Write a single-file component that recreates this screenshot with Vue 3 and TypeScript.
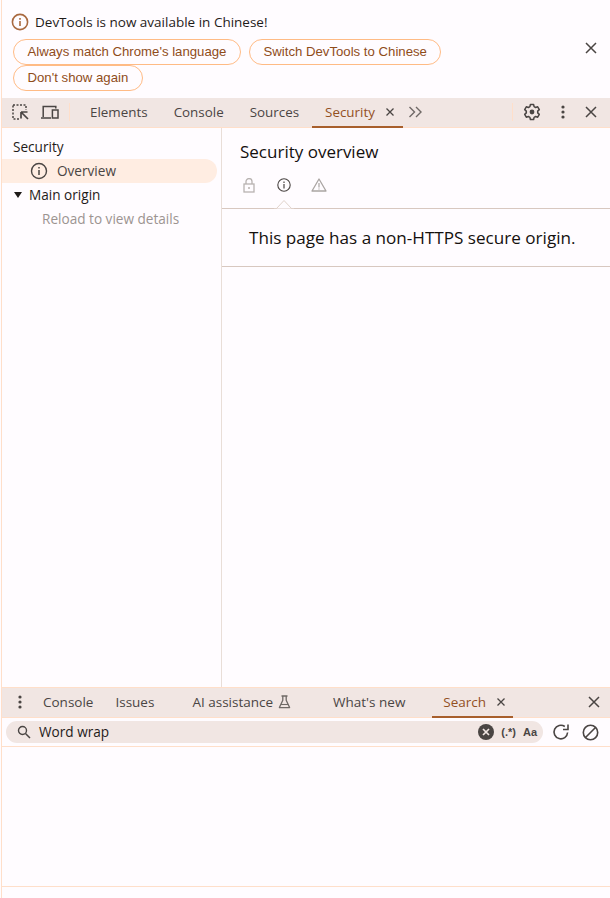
<script setup lang="ts">
const mainTabs: string[] = ['Elements', 'Console', 'Sources']
</script>

<template>
  <div class="page">
    <section class="infobar">
      <div class="info-main">
        <div class="info-title">
          <svg class="info-icon" width="18" height="18" viewBox="0 0 18 18"><circle cx="9" cy="9" r="7.6" fill="none" stroke="#a9693f" stroke-width="1.6"/><path d="M9 8v5M9 5v1.7" stroke="#a9693f" stroke-width="1.6" fill="none"/></svg>
          <span>DevTools is now available in Chinese!</span>
        </div>
        <div class="info-actions">
          <button class="pill">Always match Chrome's language</button>
          <button class="pill">Switch DevTools to Chinese</button>
          <button class="pill">Don't show again</button>
        </div>
      </div>
      <svg class="info-close" width="12" height="12" viewBox="0 0 12 12"><path d="M1 1l10 10M11 1L1 11" stroke="#4a4543" stroke-width="1.5"/></svg>
    </section>

    <header class="toolbar main-bar">
      <div class="tool-icons">
        <svg width="18" height="18" viewBox="0 0 18 18" fill="none"><path d="M2 2h13v5M8 16H2V2" stroke="#4a4543" stroke-width="1.5" stroke-dasharray="2 1.5"/><path d="M10 9h6.5M10 9v6.5M10 9l7 7" stroke="#4a4543" stroke-width="1.7"/></svg>
        <svg width="20" height="18" viewBox="0 0 20 18" fill="none"><path d="M1 15h10M3.2 14V3.6h12.6v2" stroke="#4a4543" stroke-width="1.5"/><rect x="12.4" y="7" width="5.6" height="8" stroke="#4a4543" stroke-width="1.5"/></svg>
      </div>
      <span class="vsep first"></span>
      <nav class="tabs main-tabs">
        <span v-for="t in mainTabs" :key="t" class="tab">{{ t }}</span>
        <span class="tab active">Security<svg class="tab-x" width="10" height="10" viewBox="0 0 10 10"><path d="M1.5 1.5l7 7M8.5 1.500l-7 7" stroke="#4a4543" stroke-width="1.3"/></svg></span>
      </nav>
      <svg class="chev" width="15" height="12" viewBox="0 0 15 12" fill="none"><path d="M1.5 1l5 5-5 5M8 1l5 5-5 5" stroke="#6f6966" stroke-width="1.4"/></svg>
      <span class="grow"></span>
      <span class="vsep"></span>
      <div class="end-icons">
        <svg width="18" height="18" viewBox="0 0 18 18" fill="none"><path d="M7.4 1.5h3.2l.5 2.2 1.5.8 2.1-.7 1.6 2.8-1.6 1.5v1.8l1.6 1.5-1.6 2.8-2.1-.7-1.5.8-.5 2.2H7.4l-.5-2.2-1.5-.8-2.1.7-1.6-2.8 1.6-1.5V8.1L1.7 6.6l1.6-2.8 2.1.7 1.5-.8z" stroke="#4a4543" stroke-width="1.5" stroke-linejoin="round"/><circle cx="9" cy="9" r="2.4" fill="#4a4543"/></svg>
        <svg width="4" height="14" viewBox="0 0 4 14"><circle cx="2" cy="2" r="1.6" fill="#4a4543"/><circle cx="2" cy="7" r="1.6" fill="#4a4543"/><circle cx="2" cy="12" r="1.6" fill="#4a4543"/></svg>
        <svg width="12" height="12" viewBox="0 0 12 12"><path d="M1 1l10 10M11 1L1 11" stroke="#4a4543" stroke-width="1.5"/></svg>
      </div>
    </header>

    <main class="security">
      <aside class="sidebar">
        <div class="side-title">Security</div>
        <div class="side-item selected">
          <svg width="18" height="18" viewBox="0 0 18 18" fill="none"><circle cx="9" cy="9" r="7.5" stroke="#4a4543" stroke-width="1.4"/><path d="M9 8v5M9 5v1.6" stroke="#4a4543" stroke-width="1.5"/></svg>
          <span class="side-label">Overview</span>
        </div>
        <div class="side-group"><i class="tri"></i><span class="side-label">Main origin</span></div>
        <div class="side-hint">Reload to view details</div>
      </aside>
      <div class="panel">
        <div class="panel-head">
          <h1>Security overview</h1>
          <div class="states">
            <svg class="dim" width="12" height="15" viewBox="0 0 12 15" fill="none"><rect x="1" y="6" width="10" height="8" stroke="#b8b3b1" stroke-width="1.3"/><path d="M3 6V3.6a3 3 0 016 0V6" stroke="#b8b3b1" stroke-width="1.3"/><circle cx="6" cy="10" r="1" fill="#b8b3b1"/></svg>
            <svg width="14" height="14" viewBox="0 0 14 14" fill="none"><circle cx="7" cy="7" r="6.2" stroke="#4a4543" stroke-width="1.1"/><path d="M7 6v4.4M7 3.6v1.3" stroke="#4a4543" stroke-width="1.2"/></svg>
            <svg class="warn" width="16" height="14" viewBox="0 0 16 14" fill="none"><path d="M8 1l7 12H1z" stroke="#aaa5a3" stroke-width="1.3" stroke-linejoin="round"/><path d="M8 5v4.4M8 10.4v1.2" stroke="#aaa5a3" stroke-width="1.2"/></svg>
          </div>
          <svg class="notch" width="20" height="10" viewBox="0 0 20 10"><path d="M0 9.5h2.5L10 1.5l7.5 8H20" fill="#fffcff" stroke="#e0d2ca"/></svg>
        </div>
        <p class="summary">This page has a non-HTTPS secure origin.</p>
      </div>
    </main>

    <section class="drawer">
      <header class="toolbar drawer-bar">
        <svg class="kebab" width="4" height="14" viewBox="0 0 4 14"><circle cx="2" cy="2" r="1.6" fill="#4a4543"/><circle cx="2" cy="7" r="1.6" fill="#4a4543"/><circle cx="2" cy="12" r="1.6" fill="#4a4543"/></svg>
        <nav class="tabs drawer-tabs">
          <span class="dtab c1">Console</span>
          <span class="dtab c2">Issues</span>
          <span class="dtab c3">AI assistance
            <svg width="13" height="14" viewBox="0 0 13 14" fill="none"><path d="M3.5 1h6M4.8 1v4.2L1.4 12.6h10.2L8.2 5.2V1" stroke="#6f6966" stroke-width="1.3" stroke-linejoin="round"/><path d="M3 9.500h7" stroke="#6f6966" stroke-width="1.1"/></svg>
          </span>
          <span class="dtab c4">What's new</span>
          <span class="dtab dactive">Search<svg class="tab-x" width="10" height="10" viewBox="0 0 10 10"><path d="M1.5 1.5l7 7M8.5 1.500l-7 7" stroke="#4a4543" stroke-width="1.3"/></svg></span>
        </nav>
        <span class="grow"></span>
        <svg class="draw-close" width="12" height="12" viewBox="0 0 12 12"><path d="M1 1l10 10M11 1L1 11" stroke="#4a4543" stroke-width="1.5"/></svg>
      </header>
      <div class="search-row">
        <div class="search-box">
          <svg width="14" height="14" viewBox="0 0 14 14" fill="none"><circle cx="5.500" cy="5.500" r="4" stroke="#4a4543" stroke-width="1.4"/><path d="M8.500 8.500l4.500 4.500" stroke="#4a4543" stroke-width="1.5"/></svg>
          <span class="query">Word wrap</span>
          <span class="grow"></span>
          <svg width="16" height="16" viewBox="0 0 16 16"><circle cx="8" cy="8" r="8" fill="#4a4543"/><path d="M5 5l6 6M11 5l-6 6" stroke="#f1e6e3" stroke-width="1.700"/></svg>
          <span class="opt regex">(.*)</span>
          <span class="opt case">Aa</span>
        </div>
        <svg class="act refresh" width="18" height="18" viewBox="0 0 18 18" fill="none"><path d="M15.600 9.500A6.800 6.800 0 1112.800 3.500" stroke="#4a4543" stroke-width="1.600"/><path d="M16 1.500v5h-5" stroke="#4a4543" stroke-width="1.600"/></svg>
        <svg class="act block" width="17" height="17" viewBox="0 0 17 17" fill="none"><circle cx="8.500" cy="8.500" r="7.200" stroke="#4a4543" stroke-width="1.600"/><path d="M3.500 13.500l10-10" stroke="#4a4543" stroke-width="1.600"/></svg>
      </div>
      <div class="results"></div>
      <div class="status"></div>
    </section>
  </div>
</template>

<style>
html, body { margin: 0; background: #fffcff; }
</style>

<style scoped>
.page {
  height: 898px;
  box-sizing: border-box;
  border-left: 1px solid #ffdfca;
  margin-left: 1px;
  width: 609px;
  display: flex;
  flex-direction: column;
  background: #fffcff;
  font-family: "Open Sans", "Noto Sans", sans-serif;
  font-size: 13.6px;
  color: #1f1b19;
  overflow: hidden;
}
svg { flex: none; display: block; }
.grow { flex: 1; }

.infobar {
  height: 98px;
  box-sizing: border-box;
  display: flex;
  padding: 13px 13px 0 9px;
  position: relative;
}
.info-main { flex: 1; }
.info-title { display: flex; align-items: center; gap: 6px; height: 18px; font-size: 13.5px; }
.info-actions { display: flex; flex-wrap: wrap; gap: 0 8px; width: 460px; margin: 8px 0 0 2px; }
.pill {
  height: 26px;
  box-sizing: border-box;
  border: 1px solid #ffbb85;
  border-radius: 13px;
  background: #fffcff;
  color: #8f4c1a;
  padding: 0 13.500px;
  font: 13.200px "Liberation Sans", Arial, sans-serif;
  line-height: 24px;
}
.info-close { position: absolute; left: 583px; top: 42px; }

.toolbar {
  display: flex;
  align-items: center;
  background: #f1e6e3;
  box-sizing: border-box;
  font-size: 13.4px;
}
.main-bar { height: 30px; border-bottom: 1px solid #ffdfca; padding-bottom: 1px; }
.tool-icons { display: flex; align-items: center; gap: 11px; padding-left: 9px; }
.vsep { width: 1px; height: 18px; background: #ffdfca; }
.vsep.first { margin-left: 9px; }
.tabs { display: flex; height: 100%; }
.main-tabs { margin-left: 7px; }
.tab {
  display: flex;
  align-items: center;
  padding: 0 13px;
  color: #4a4543;
  position: relative;
}
.tab.active { color: #93501f; padding-right: 8px; }
.tab.active::after,
.dactive::after {
  content: "";
  position: absolute;
  left: 0;
  right: 0;
  bottom: -2px;
  height: 2px;
  background: #a85f2c;
}
.tab-x { margin-left: 10px; }
.chev { margin-left: 5px; }
.end-icons { display: flex; align-items: center; width: 97px; padding-left: 10px; gap: 20px; box-sizing: border-box; }

.security { height: 559px; display: flex; }
.sidebar { width: 220px; box-sizing: border-box; border-right: 1px solid #e9ded8; padding-top: 7px; }
.side-title { height: 24px; line-height: 24px; padding-left: 11px; }
.side-label { line-height: 23px; height: 24px; }
.side-item {
  height: 24px;
  margin-right: 4px;
  border-radius: 0 12px 12px 0;
  background: #ffede2;
  display: flex;
  align-items: center;
  gap: 9px;
  padding-left: 28px;
  color: #4a4543;
}
.side-group { height: 24px; display: flex; align-items: center; padding-left: 12px; gap: 7px; }
.tri { width: 0; height: 0; border: 4.500px solid transparent; border-top: 6.500px solid #1f1b19; border-bottom: 0; }
.side-hint { height: 24px; line-height: 24px; padding-left: 40px; color: #9c9491; }

.panel { flex: 1; }
.panel-head { height: 81px; box-sizing: border-box; border-bottom: 1px solid #d8c8c0; padding: 12px 0 0 18px; position: relative; }
h1 { margin: 0; font-size: 17px; line-height: 24px; font-weight: 400; color: #14100e; }
.states { display: flex; align-items: center; gap: 22px; margin: 13px 0 0 3px; height: 16px; }
.warn { margin-left: -2px; }
.notch { position: absolute; left: 52px; bottom: -1px; }
.summary { margin: 0; height: 58px; box-sizing: border-box; border-bottom: 1px solid #d8c8c0; font-size: 17.100px; line-height: 58px; padding-left: 27px; color: #14100e; }

.drawer { flex: 1; display: flex; flex-direction: column; border-top: 1px solid #ffdfca; }
.drawer-bar { height: 30px; border-bottom: 1px solid #ffdfca; padding-bottom: 1px; font-size: 13.5px; }
.kebab { margin-left: 16px; }
.drawer-tabs { margin-left: 21px; color: #4a4543; }
.dtab { display: flex; align-items: center; gap: 5px; position: relative; }
.c2 { margin-left: 22px; }
.c3 { margin-left: 38px; }
.c4 { margin-left: 42px; }
.dactive { margin-left: 27px; padding: 0 7px 0 11px; color: #93501f; gap: 0; }
.draw-close { margin-right: 10px; }
.search-row { height: 29px; box-sizing: border-box; border-bottom: 1px solid #ffdfca; display: flex; align-items: center; }
.search-box {
  width: 537px;
  height: 22px;
  margin-left: 4px;
  border-radius: 11px;
  background: #f1e6e3;
  display: flex;
  align-items: center;
  padding: 0 6px 0 11px;
  box-sizing: border-box;
}
.query { margin-left: 8px; line-height: 21px; height: 22px; }
.opt { font-family: "Liberation Sans", sans-serif; font-size: 11px; font-weight: 700; color: #4a4543; }
.regex { margin-left: 7px; }
.case { margin-left: 7px; }
.act { margin-left: 9px; }
.refresh { margin-left: 9px; }
.block { margin-left: 12px; }
.results { height: 139px; border-bottom: 1px solid #ffdfca; }
.status { flex: 1; }
</style>
